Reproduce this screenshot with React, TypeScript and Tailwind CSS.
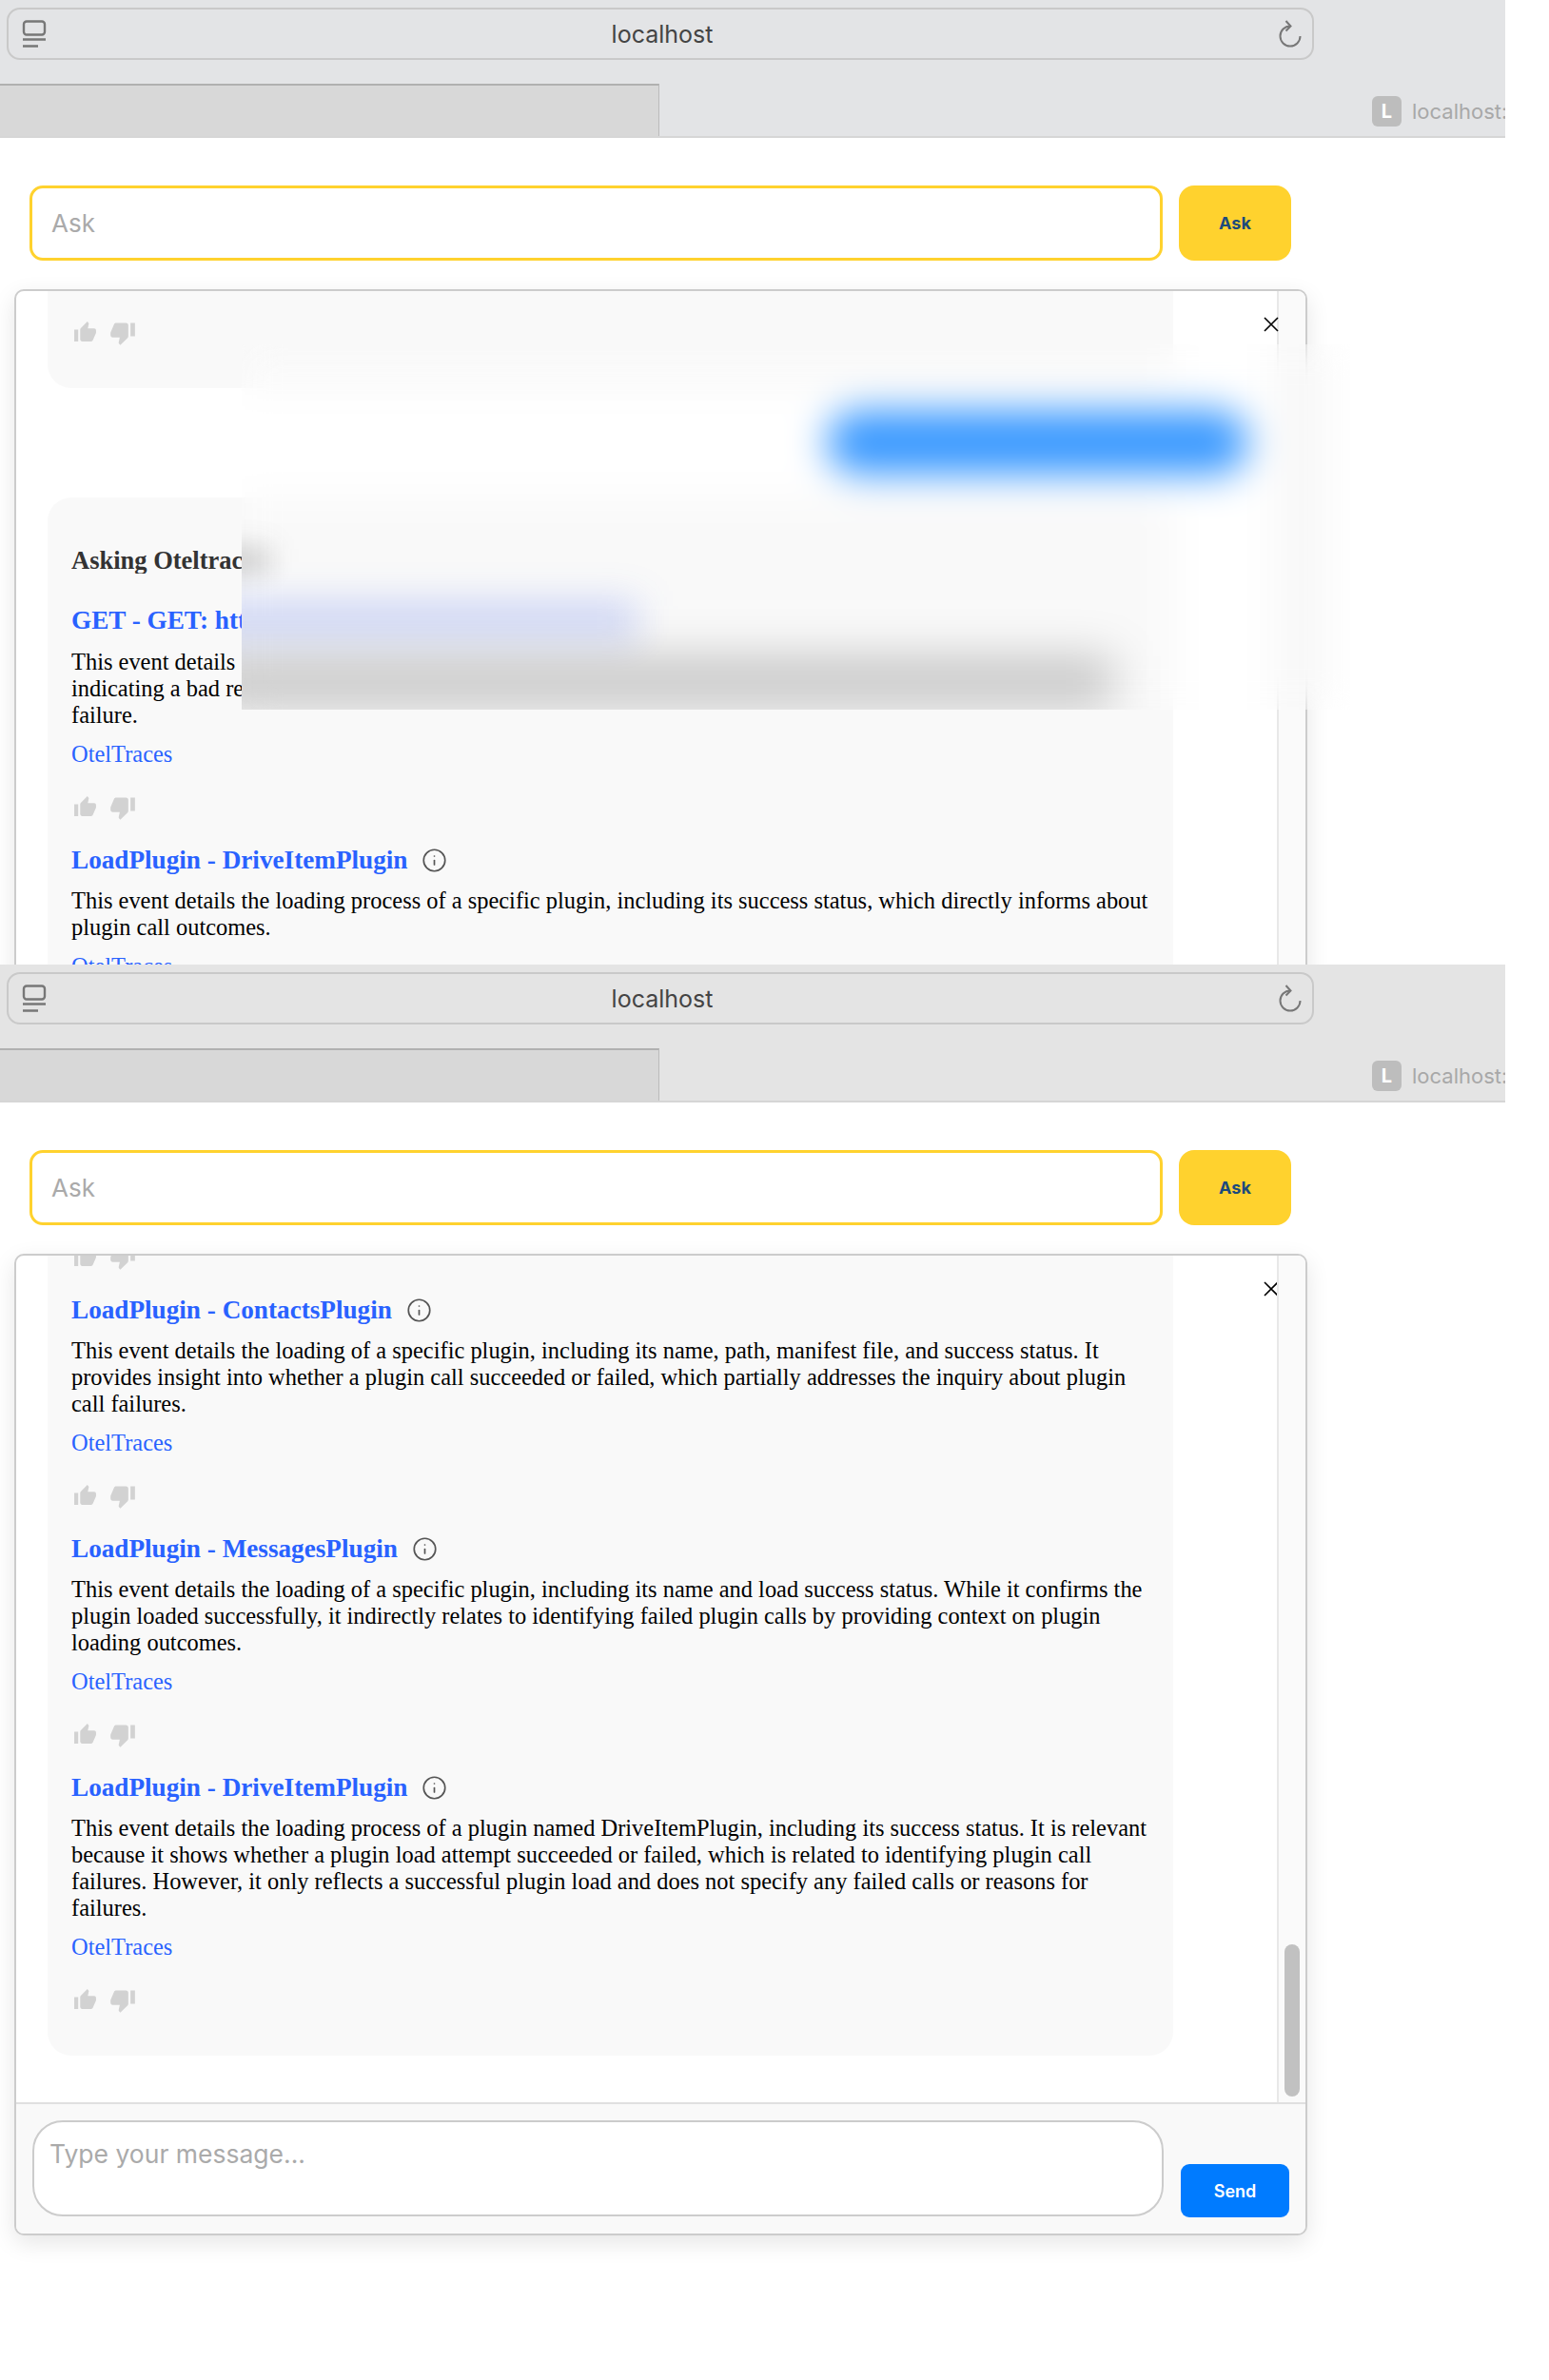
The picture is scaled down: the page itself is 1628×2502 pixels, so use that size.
import { MdThumbUp, MdThumbDown } from "react-icons/md";
import { Info } from "lucide-react";

const sans = "font-['Inter','Noto_Sans',sans-serif]";
const serif = "font-['Liberation_Serif','Times_New_Roman',serif]";

function Chrome({ bg }: { bg: string }) {
  return (
    <div className={`${bg} ${sans} w-[1582px] h-[145px] shrink-0 overflow-hidden border-b-2 border-[#d6d6d6] pt-2`}>
      <div className="ml-[7px] w-[1374px] h-[55px] border-2 border-[#c9c9c9] rounded-[14px] flex items-center justify-between pl-[14px] pr-[10px]">
        <svg width="26" height="30" viewBox="0 0 26 30" fill="none" stroke="#777" strokeWidth="2.4">
          <rect x="2" y="1.5" width="22" height="14" rx="3" />
          <path d="M1 20.5h24M1 27.5h16" />
        </svg>
        <span className="text-[25px] text-[#444] leading-none pt-[2px]">localhost</span>
        <svg width="26" height="30" viewBox="0 0 26 30" fill="none" stroke="#777" strokeWidth="2">
          <path d="M13 6.5a10.5 10.5 0 1 0 10.5 10.5" />
          <path d="M8.5 1l5 5.5-5 5" />
        </svg>
      </div>
      <div className="mt-[25px] flex h-[57px]">
        <div className="w-[693px] h-full bg-[#d8d8d8] border-t-2 border-t-[#b0b0b0] border-r border-r-[#bbbbbb]" />
        <div className="ml-[749px] mt-[13px] flex items-start gap-[11px] w-[140px]">
          <div className="w-[31px] h-[32px] shrink-0 rounded-[6px] bg-[#bdbdbd] text-white font-bold text-[20px] flex items-center justify-center">L</div>
          <span className="text-[22px] leading-[32px] text-[#a8a8a8] whitespace-nowrap">localhost:3000</span>
        </div>
      </div>
    </div>
  );
}

function AskRow() {
  return (
    <div className={`${sans} ml-[31px] mt-[50px] flex gap-[17px] h-[79px] shrink-0`}>
      <input
        placeholder="Ask"
        className="w-[1191px] h-full border-[3px] border-[#ffd22e] rounded-[14px] pl-[20px] text-[26px] bg-white outline-none placeholder:text-[#aaaaaa]"
      />
      <button className="w-[118px] h-full bg-[#ffd22e] rounded-[16px] text-[18px] font-bold text-[#1d4a7c]">Ask</button>
    </div>
  );
}

function Thumbs() {
  return (
    <div className="flex items-center h-[23px] ml-[2px] gap-[13px] text-[#d2d2d2]">
      <MdThumbUp size={25} />
      <MdThumbDown size={28} />
    </div>
  );
}

function CloseX() {
  return (
    <svg className="absolute left-[1311px] top-[27px]" width="16" height="16" viewBox="0 0 16 16" stroke="#000" strokeWidth="1.6" fill="none">
      <path d="M1 1l14 14M15 1L1 15" />
    </svg>
  );
}

function Title({ children, info = true }: { children: React.ReactNode; info?: boolean }) {
  return (
    <div className="flex items-center gap-[15px] h-[32px] text-[27.2px] leading-[32px] font-bold text-[#2962ff]">
      <span className="whitespace-nowrap">{children}</span>
      {info && <Info size={27} strokeWidth={1.5} className="text-[#555555]" />}
    </div>
  );
}

function Result({ title, body }: { title: string; body: string }) {
  return (
    <div className="mb-[28px]">
      <Title>{title}</Title>
      <p className="mt-[13px] w-[1137px] text-[24.45px] leading-[28px] text-black">{body}</p>
      <a className="block mt-[13px] text-[24.45px] leading-[28px] text-[#2962ff]">OtelTraces</a>
      <div className="mt-[30px]">
        <Thumbs />
      </div>
    </div>
  );
}

function Scrollbar({ thumb }: { thumb?: boolean }) {
  return (
    <div className="w-[30px] shrink-0 border-l-2 border-[#e8e8e8] bg-[#fafafa] flex flex-col justify-end pb-[6px]">
      {thumb && <div className="ml-[6px] w-[16px] h-[160px] rounded-full bg-[#c1c1c1]" />}
    </div>
  );
}

function Frame1() {
  return (
    <div className="relative h-[1014px] shrink-0 overflow-hidden">
      <Chrome bg="bg-[#e3e4e6]" />
      <AskRow />
      <div className={`${serif} relative mt-[30px] ml-[15px] w-[1359px] h-[1032px] border-2 border-[#cccccc] rounded-[10px] bg-white shadow-[0_8px_24px_rgba(0,0,0,0.1)] flex overflow-hidden`}>
        <div className="relative w-[1325px] shrink-0">
          <CloseX />
          <div className="ml-[33px] w-[1183px] bg-[#f9f9f9] rounded-b-[25px] pl-[25px] pt-[32px] pb-[47px]">
            <Thumbs />
          </div>
          <div className="mt-[23px] ml-[852px] w-[443px] h-[68px] rounded-full bg-[#3a99ff]" />
          <div className="mt-[24px] ml-[33px] w-[1183px] bg-[#f9f9f9] rounded-[25px] px-[25px] pt-[52px] pb-[46px]">
            <div className="w-[179px] overflow-hidden text-[26.5px] leading-[28px] font-bold text-[#333333] whitespace-nowrap">Asking Oteltraces</div>
            <div className="mt-[33px] w-[179px] overflow-hidden">
              <Title info={false}>GET - GET: http</Title>
            </div>
            <div className="mt-[14px] text-[24.45px] leading-[28px] text-black">
              <div className="w-[179px] overflow-hidden whitespace-nowrap">This event details</div>
              <div className="w-[179px] overflow-hidden whitespace-nowrap">indicating a bad re</div>
              <div>failure.</div>
            </div>
            <a className="block mt-[13px] text-[24.45px] leading-[28px] text-[#2962ff]">OtelTraces</a>
            <div className="mt-[30px] mb-[28px]">
              <Thumbs />
            </div>
            <Result
              title="LoadPlugin - DriveItemPlugin"
              body="This event details the loading process of a specific plugin, including its success status, which directly informs about plugin call outcomes."
            />
          </div>
        </div>
        <Scrollbar />
      </div>
      <div className="absolute left-[254px] top-[362px] w-[1166px] h-[384px] backdrop-blur-[20px] overflow-hidden">
        <div className="absolute -left-[40px] top-[214px] w-[70px] h-[26px] bg-[rgba(40,40,40,0.22)] blur-[14px]" />
        <div className="absolute -left-[40px] top-[272px] w-[456px] h-[34px] bg-[rgba(41,78,235,0.24)] blur-[20px]" />
        <div className="absolute -left-[40px] top-[328px] w-[956px] h-[54px] bg-[rgba(0,0,0,0.2)] blur-[24px]" />
      </div>
    </div>
  );
}

function Frame2() {
  return (
    <div className="flex flex-col shrink-0 pb-[152px]">
      <Chrome bg="bg-[#e4e4e4]" />
      <AskRow />
      <div className={`${serif} relative mt-[30px] ml-[15px] w-[1359px] h-[1032px] border-2 border-[#cccccc] rounded-[10px] bg-white shadow-[0_8px_24px_rgba(0,0,0,0.1)] flex flex-col overflow-hidden`}>
        <div className="flex h-[890px] shrink-0">
          <div className="relative w-[1325px] shrink-0 overflow-hidden">
            <CloseX />
            <div className="ml-[33px] w-[1183px] bg-[#f9f9f9] rounded-b-[25px] px-[25px] pb-[19px]">
              <div className="-mt-[10px] mb-[28px]">
                <Thumbs />
              </div>
              <Result
                title="LoadPlugin - ContactsPlugin"
                body="This event details the loading of a specific plugin, including its name, path, manifest file, and success status. It provides insight into whether a plugin call succeeded or failed, which partially addresses the inquiry about plugin call failures."
              />
              <Result
                title="LoadPlugin - MessagesPlugin"
                body="This event details the loading of a specific plugin, including its name and load success status. While it confirms the plugin loaded successfully, it indirectly relates to identifying failed plugin calls by providing context on plugin loading outcomes."
              />
              <Result
                title="LoadPlugin - DriveItemPlugin"
                body="This event details the loading process of a plugin named DriveItemPlugin, including its success status. It is relevant because it shows whether a plugin load attempt succeeded or failed, which is related to identifying plugin call failures. However, it only reflects a successful plugin load and does not specify any failed calls or reasons for failures."
              />
            </div>
          </div>
          <Scrollbar thumb />
        </div>
        <div className={`${sans} flex-1 border-t-2 border-[#e0e0e0] bg-[#f9f9f9] flex items-start gap-[18px] pl-[17px] pt-[17px]`}>
          <textarea
            placeholder="Type your message..."
            className="w-[1189px] h-[101px] resize-none border-2 border-[#cccccc] rounded-[32px] bg-white pl-[16px] pt-[18px] text-[26.5px] leading-[30px] outline-none placeholder:text-[#aaaaaa]"
          />
          <button className="mt-[46px] w-[114px] h-[56px] rounded-[9px] bg-[#007bff] text-white text-[18px] font-semibold">Send</button>
        </div>
      </div>
    </div>
  );
}

export default function App() {
  return (
    <div className="w-[1628px] h-[2502px] bg-white overflow-hidden flex flex-col">
      <Frame1 />
      <Frame2 />
    </div>
  );
}
